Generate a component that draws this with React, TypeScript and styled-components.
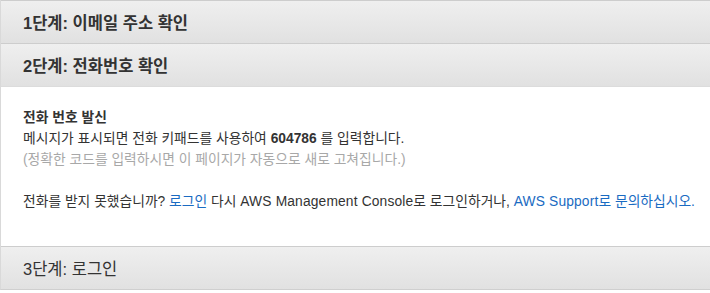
import React from "react";
import styled, { createGlobalStyle } from "styled-components";

const GlobalStyle = createGlobalStyle`
  html, body {
    margin: 0;
    padding: 0;
    background: #ffffff;
  }
  body {
    font-family: "Liberation Sans", "Noto Sans CJK KR", sans-serif;
    color: #333333;
  }
`;

const Steps = styled.div`
  width: 710px;
  border-left: 1px solid #d9d9d9;
  border-bottom: 1px solid #cfcfcf;
  box-sizing: border-box;
`;

const StepHeader = styled.div<{ $bold?: boolean }>`
  height: 43px;
  box-sizing: border-box;
  border-top: 1px solid #cdcdcd;
  background: linear-gradient(#efefef, #e1e1e1);
  display: flex;
  align-items: center;
  padding: 0 0 1px 22px;
  font-size: 16.5px;
  font-weight: ${(p) => (p.$bold ? 700 : 400)};
  color: #333333;
`;

const StepBody = styled.div`
  height: 160px;
  box-sizing: border-box;
  border-top: 1px solid #dcdcdc;
  padding: 20px 22px 0;
  font-size: 13.8px;
  line-height: 21px;
  color: #333333;
`;

const Block = styled.p`
  margin: 0 0 21px;
  white-space: nowrap;
`;

const Line = styled.span<{ $tone?: "title" | "muted" }>`
  display: block;
  font-weight: ${(p) => (p.$tone === "title" ? 700 : 400)};
  color: ${(p) => (p.$tone === "muted" ? "#a8a8a8" : "#333333")};
`;

const Code = styled.b`
  font-weight: 700;
`;

const Latin = styled.span`
  letter-spacing: 0.15px;
`;

const Link = styled.a`
  color: #1a6bc2;
  text-decoration: none;
`;

export default function App() {
  return (
    <>
      <GlobalStyle />
      <Steps>
        <StepHeader $bold>1단계: 이메일 주소 확인</StepHeader>
        <StepHeader $bold>2단계: 전화번호 확인</StepHeader>
        <StepBody>
          <Block>
            <Line $tone="title">전화 번호 발신</Line>
            <Line>
              메시지가 표시되면 전화 키패드를 사용하여 <Code>604786</Code> 를 입력합니다.
            </Line>
            <Line $tone="muted">
              (정확한 코드를 입력하시면 이 페이지가 자동으로 새로 고쳐집니다.)
            </Line>
          </Block>
          <Block>
            전화를 받지 못했습니까? <Link href="#">로그인</Link> 다시{" "}
            <Latin>AWS Management Console</Latin>로 로그인하거나,{" "}
            <Link href="#">
              <Latin>AWS Support</Latin>로 문의하십시오.
            </Link>
          </Block>
        </StepBody>
        <StepHeader>3단계: 로그인</StepHeader>
      </Steps>
    </>
  );
}
